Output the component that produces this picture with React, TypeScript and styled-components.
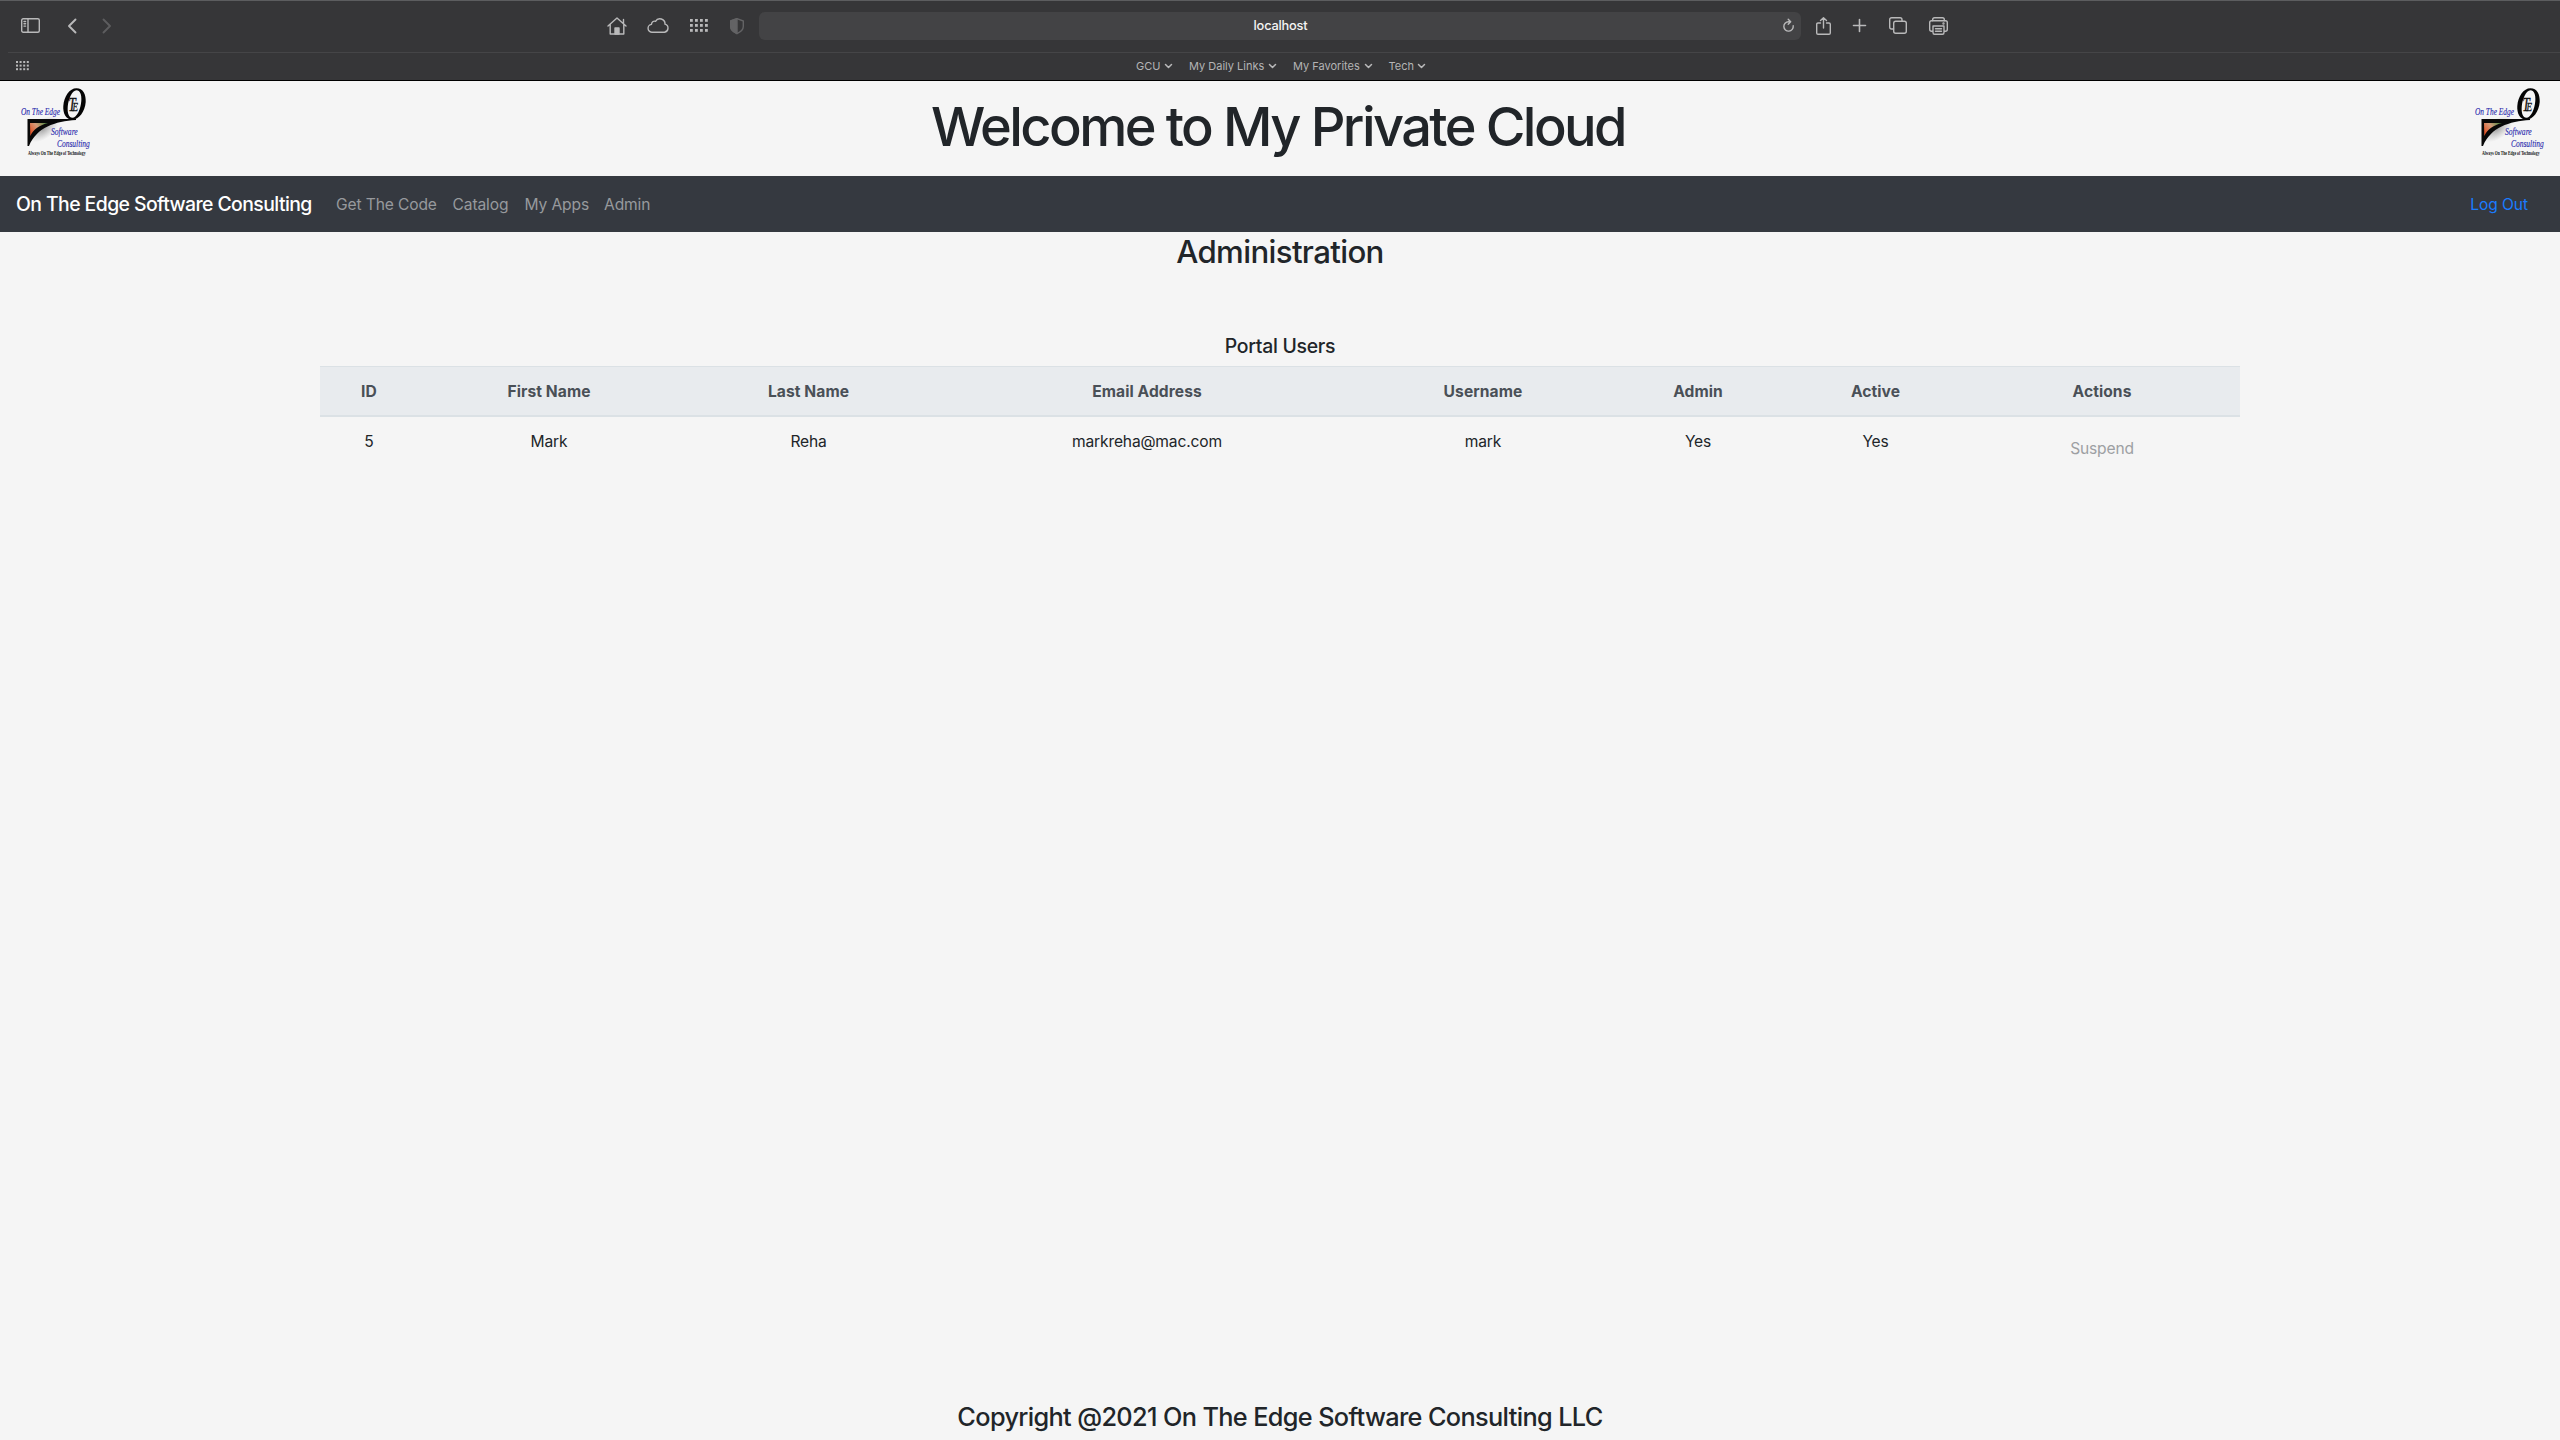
import React from "react";
import styled, { createGlobalStyle } from "styled-components";

const Global = createGlobalStyle`
  *, *::before, *::after { box-sizing: border-box; }
  body { margin: 0; background: #f5f5f5; color: #212529; font: 400 15.6px/24px Inter, "Liberation Sans", sans-serif; }
`;

const Page = styled.div`
  display: flex;
  flex-direction: column;
  height: 1440px;
  width: 2560px;
  overflow: hidden;
`;

const Chrome = styled.div`
  display: flex;
  flex-direction: column;
  height: 81px;
  flex: none;
  background: #363638;
  border-top: 1px solid #5c5d5f;
  border-bottom: 1px solid #000;
`;

const Toolbar = styled.div`
  display: flex;
  align-items: center;
  height: 51px;
  padding: 0 0 2px 21px;
`;

const Icon = styled.svg<{ $gap?: number; $color?: string }>`
  display: block;
  flex: none;
  overflow: visible;
  margin-left: ${(p) => p.$gap ?? 0}px;
  color: ${(p) => p.$color ?? "#b9b9ba"};
  fill: none;
  stroke: currentColor;
  stroke-width: 1.4;
  stroke-linecap: round;
  stroke-linejoin: round;
`;

const AddressBar = styled.div`
  display: grid;
  grid-template-columns: 1fr auto 1fr;
  align-items: center;
  width: 1042px;
  height: 28px;
  margin-left: 15px;
  padding: 0 7px 0 8px;
  border-radius: 6px;
  background: #434345;
`;

const Host = styled.span`
  grid-column: 2;
  font-size: 12.8px;
  font-weight: 500;
  line-height: 28px;
  letter-spacing: -0.2px;
  color: #f4f4f4;
`;

const Reload = styled.div`
  justify-self: end;
`;

const Favorites = styled.div`
  display: flex;
  align-items: center;
  height: 28px;
  margin-left: 8px;
  padding: 0 0 1px 8px;
  border-top: 1px solid #454547;
`;

const FavoriteList = styled.div`
  display: flex;
  gap: 17px;
  margin-left: 1107px;
`;

const Favorite = styled.span<{ $width: number }>`
  display: flex;
  align-items: center;
  justify-content: space-between;
  width: ${(p) => p.$width}px;
  font-size: 11px;
  line-height: 16px;
  white-space: nowrap;
  color: #b4b4b5;
`;

const Header = styled.header`
  display: flex;
  justify-content: space-between;
  height: 95px;
  padding: 3px 8px 0 14px;
`;

const Title = styled.h1`
  margin: 9px 10px 0 0;
  font-size: 54.2px;
  font-weight: 500;
  line-height: 67px;
  letter-spacing: -2.6px;
`;

const Navbar = styled.nav`
  display: flex;
  align-items: center;
  height: 56px;
  padding: 0 32px 0 16px;
  background: #353940;
`;

const Brand = styled.span`
  margin-right: 16px;
  width: 304px;
  font-size: 19.4px;
  font-weight: 500;
  line-height: 30px;
  letter-spacing: -0.57px;
  white-space: nowrap;
  color: #fff;
`;

const NavLink = styled.span<{ $width: number }>`
  width: ${(p) => p.$width}px;
  padding-top: 2px;
  letter-spacing: -0.13px;
  white-space: nowrap;
  color: #97999d;
`;

const LogOut = styled.span`
  margin-left: auto;
  padding-top: 2px;
  letter-spacing: -0.1px;
  color: #1a7cff;
`;

const Main = styled.main`
  display: flex;
  flex: 1;
  flex-direction: column;
  align-items: center;
`;

const PageTitle = styled.h2`
  margin: 1px 0 0;
  font-size: 31.2px;
  font-weight: 500;
  line-height: 38px;
  letter-spacing: -0.64px;
`;

const TableTitle = styled.h5`
  margin: 63px 0 8px;
  font-size: 19.4px;
  font-weight: 500;
  line-height: 24px;
  letter-spacing: -0.27px;
`;

const Table = styled.table`
  width: 1920px;
  table-layout: fixed;
  border-collapse: separate;
  border-spacing: 0;
  text-align: center;
`;

const Column = styled.col<{ $width: number }>`
  width: ${(p) => p.$width}px;
`;

const HeadCell = styled.th`
  padding: 13px 12px 11px;
  border-top: 1px solid #dbe1e5;
  border-bottom: 2px solid #dbe1e5;
  background: #e8ebee;
  color: #4a5057;
  font-weight: 700;
  letter-spacing: 0.08px;
`;

const Cell = styled.td`
  padding: 13px 12px 11px;
  vertical-align: top;
  letter-spacing: -0.16px;
`;

const SuspendButton = styled.button`
  padding: 6px 12px;
  border: 1px solid transparent;
  background: transparent;
  color: #9da0a3;
  font: inherit;
  letter-spacing: inherit;
`;

const Footer = styled.footer`
  height: 39px;
  font-size: 25.3px;
  font-weight: 500;
  line-height: 32px;
  letter-spacing: -0.64px;
  text-align: center;
`;

const Dots = ({ cols, step, size }: { cols: number; step: number; size: number }) => (
  <>
    {[0, 1, 2].flatMap((r) =>
      Array.from({ length: cols }, (_, c) => (
        <rect key={`${r}-${c}`} x={c * step} y={r * step} width={size} height={size} fill="currentColor" stroke="none" />
      ))
    )}
  </>
);

const LogoMark = styled.svg`
  display: block;
  flex: none;
  overflow: visible;
  font-family: "Liberation Serif", serif;
`;

const Logo = ({ id }: { id: string }) => (
  <LogoMark width="84" height="78" viewBox="14 84 84 78">
    <defs>
      <linearGradient id={`${id}-warm`} x1="0" y1="0.6" x2="1" y2="0">
        <stop offset="0" stopColor="#e0582c" />
        <stop offset="0.45" stopColor="#d49a78" />
        <stop offset="1" stopColor="#3f8a3c" />
      </linearGradient>
      <radialGradient id={`${id}-shade`}>
        <stop offset="0" stopColor="#777" stopOpacity="0.65" />
        <stop offset="1" stopColor="#999" stopOpacity="0" />
      </radialGradient>
    </defs>
    <ellipse cx="43" cy="129" rx="18" ry="10" fill={`url(#${id}-shade)`} transform="rotate(-35 43 129)" />
    <path d="M27.500 119H76V120C55 121.500 37 127 29 146L27.500 146Z" fill="#080808" />
    <path d="M30 123H48C40 125 33 129.500 30.300 136Z" fill={`url(#${id}-warm)`} />
    <path
      fillRule="evenodd"
      fill="#050505"
      d="M76.500 88.300C83 88.300 86.200 94.500 85.700 102C85 111.500 79 119.700 72.300 119.700C65.800 119.700 62.800 113 63.300 106C64 96.500 69.500 88.300 76.500 88.300ZM76.500 90.200C72 90.200 68.300 99 67.700 107C67.300 113.500 69 117.800 72.300 117.800C77 117.800 80.700 109 81.300 101C81.800 94.500 80 90.200 76.500 90.200Z"
    />
    <text transform="translate(68.300 111) scale(0.75 1)" fontSize="18" fontStyle="italic" fill="#111" stroke="#111" strokeWidth="0.300">
      T<tspan fontSize="12" dx="-4.500">E</tspan>
    </text>
    <g fill="#2c2cae" stroke="#2c2cae" strokeWidth="0.150" fontSize="10.700" fontStyle="italic">
      <text transform="translate(21 115) scale(0.69 1)">On The Edge</text>
      <text transform="translate(51 135) scale(0.71 1)">Software</text>
      <text transform="translate(57 147) scale(0.7 1)">Consulting</text>
    </g>
    <text transform="translate(28 155) scale(0.69 1)" fontWeight="700" fontSize="5.500" fill="#111">
      Always On The Edge of Technology
    </text>
  </LogoMark>
);

const favorites = [
  { label: "GCU", width: 36 },
  { label: "My Daily Links", width: 87 },
  { label: "My Favorites", width: 78.5 },
  { label: "Tech", width: 36.5 },
];

const links = [
  { label: "Get The Code", width: 116.5 },
  { label: "Catalog", width: 72 },
  { label: "My Apps", width: 79.5 },
  { label: "Admin", width: 60 },
];

const columns = [
  { label: "ID", width: 98 },
  { label: "First Name", width: 262 },
  { label: "Last Name", width: 257 },
  { label: "Email Address", width: 420 },
  { label: "Username", width: 252 },
  { label: "Admin", width: 178 },
  { label: "Active", width: 177 },
  { label: "Actions", width: 276 },
];

const users = [["5", "Mark", "Reha", "markreha@mac.com", "mark", "Yes", "Yes"]];

export default function App() {
  return (
    <Page>
      <Global />
      <Chrome>
        <Toolbar>
          <Icon width="19" height="15" viewBox="0 0 19 15">
            <rect x="0.700" y="0.700" width="17.600" height="13.600" rx="1.500" />
            <path d="M7 1V14M3 3.500H4.600M3 5.800H4.600M3 8.100H4.600" />
          </Icon>
          <Icon $gap={28} width="8" height="14" viewBox="0 0 8 14"><path d="M7.500 0.500L1 7L7.500 13.500" style={{ strokeWidth: 1.9 }} /></Icon>
          <Icon $gap={27} $color="#5d5d5f" width="8" height="14" viewBox="0 0 8 14"><path d="M0.500 0.500L7 7L0.500 13.500" style={{ strokeWidth: 1.9 }} /></Icon>
          <Icon $gap={496} width="20" height="18" viewBox="0 0 20 18">
            <path d="M1 9L10 1L19 9M3.200 7.500V17H16.800V7.500M16.500 6.500V2.500" />
            <path d="M8 17V11H12V17Z" fill="currentColor" />
          </Icon>
          <Icon $gap={21} width="21" height="15" viewBox="0 0 21 15">
            <path d="M4.500 14.200A3.900 3.900 0 0 1 3.500 6.400A3.100 3.100 0 0 1 7.500 3.300A5.100 5.100 0 0 1 17 6.200A4.100 4.100 0 0 1 16.500 14.200Z" />
          </Icon>
          <Icon $gap={21} width="18" height="13" viewBox="0 0 18 13"><Dots cols={4} step={5} size={2.8} /></Icon>
          <Icon $gap={22} $color="#636365" width="14" height="16" viewBox="0 0 14 16">
            <path d="M7 0.700L13.300 3V8.500C13.300 12 10.500 14 7 15.600C3.500 14 0.700 12 0.700 8.500V3Z" />
            <path d="M7 0.700V15.600C3.500 14 0.700 12 0.700 8.500V3Z" fill="currentColor" />
          </Icon>
          <AddressBar>
            <Host>localhost</Host>
            <Reload>
              <Icon width="11" height="13" viewBox="0 0 11 13">
                <path d="M10.200 6.800A4.700 4.700 0 1 1 5.500 2.700H7.300M5.200 0.200L7.700 2.700L5.200 5.200" />
              </Icon>
            </Reload>
          </AddressBar>
          <Icon $gap={15} width="15" height="18" viewBox="0 0 15 18">
            <path d="M4.500 6H2Q0.700 6 0.700 7.300V16Q0.700 17.300 2 17.300H13Q14.300 17.300 14.300 16V7.300Q14.300 6 13 6H10.500M7.500 11V0.700M4.500 3.500L7.500 0.700L10.500 3.500" />
          </Icon>
          <Icon $gap={22} width="13" height="13" viewBox="0 0 13 13"><path d="M6.500 0.500V12.500M0.500 6.500H12.500" style={{ strokeWidth: 1.6 }} /></Icon>
          <Icon $gap={23} width="18" height="17" viewBox="0 0 18 17">
            <path d="M4.500 12H2.700Q0.700 12 0.700 10V2.700Q0.700 0.700 2.700 0.700H11Q13 0.700 13 2.700V4.300" />
            <rect x="4.700" y="4.300" width="12.600" height="12" rx="2" />
          </Icon>
          <Icon $gap={22} width="19" height="18" viewBox="0 0 19 18">
            <path d="M3.700 4V2.500Q3.700 0.700 5.500 0.700H13.500Q15.300 0.700 15.300 2.500V4M4 14.200H2.500Q0.700 14.200 0.700 12.200V5.500Q0.700 3.700 2.500 3.700H16.500Q18.300 3.700 18.300 5.500V12.200Q18.300 14.200 16.500 14.200H15M4 9H15V15.500Q15 17.300 13.500 17.300H5.500Q4 17.300 4 15.500ZM6.500 11.700H12.500M6.500 14.300H12.500" />
            <circle cx="14.500" cy="6.500" r="0.500" />
          </Icon>
        </Toolbar>
        <Favorites>
          <Icon width="13" height="10" viewBox="0 0 13 10"><Dots cols={4} step={3.6} size={2} /></Icon>
          <FavoriteList>
            {favorites.map((f) => (
              <Favorite key={f.label} $width={f.width}>
                {f.label}
                <Icon width="7" height="4" viewBox="0 0 7 4"><path d="M0.500 0.500L3.500 3.500L6.500 0.500" style={{ strokeWidth: 1.5 }} /></Icon>
              </Favorite>
            ))}
          </FavoriteList>
        </Favorites>
      </Chrome>
      <Header>
        <Logo id="left" />
        <Title>Welcome to My Private Cloud</Title>
        <Logo id="right" />
      </Header>
      <Navbar>
        <Brand>On The Edge Software Consulting</Brand>
        {links.map((l) => (
          <NavLink key={l.label} $width={l.width}>{l.label}</NavLink>
        ))}
        <LogOut>Log Out</LogOut>
      </Navbar>
      <Main>
        <PageTitle>Administration</PageTitle>
        <TableTitle>Portal Users</TableTitle>
        <Table>
          <colgroup>
            {columns.map((c) => <Column key={c.label} $width={c.width} />)}
          </colgroup>
          <thead>
            <tr>{columns.map((c) => <HeadCell key={c.label}>{c.label}</HeadCell>)}</tr>
          </thead>
          <tbody>
            {users.map((u) => (
              <tr key={u[0]}>
                {u.map((v, i) => <Cell key={i}>{v}</Cell>)}
                <Cell><SuspendButton disabled>Suspend</SuspendButton></Cell>
              </tr>
            ))}
          </tbody>
        </Table>
      </Main>
      <Footer>Copyright @2021 On The Edge Software Consulting LLC</Footer>
    </Page>
  );
}
